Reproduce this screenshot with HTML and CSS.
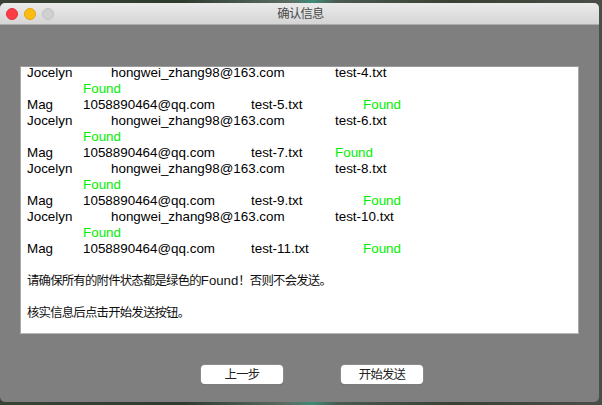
FILE: index.html
```html
<!DOCTYPE html>
<html>
<head>
<meta charset="utf-8">
<link rel="stylesheet" href="styles.css">
</head>
<body>
<div class="window">
  <div class="titlebar">
    <div class="lights">
      <span class="light red"></span>
      <span class="light yellow"></span>
      <span class="light gray"></span>
    </div>
    <div class="title">确认信息</div>
  </div>
  <div class="content">
    <div class="textbox">
      <div class="lines">
        <div class="row"><span class="c-jname">Jocelyn</span><span class="c-jmail">hongwei_zhang98@163.com</span><span>test-4.txt</span></div>
        <div class="row found-row"><span class="found">Found</span></div>
        <div class="row"><span class="c-mname">Mag</span><span class="c-mmail">1058890464@qq.com</span><span class="c-file">test-5.txt</span><span class="found">Found</span></div>
        <div class="row"><span class="c-jname">Jocelyn</span><span class="c-jmail">hongwei_zhang98@163.com</span><span>test-6.txt</span></div>
        <div class="row found-row"><span class="found">Found</span></div>
        <div class="row"><span class="c-mname">Mag</span><span class="c-mmail">1058890464@qq.com</span><span class="c-file-short">test-7.txt</span><span class="found">Found</span></div>
        <div class="row"><span class="c-jname">Jocelyn</span><span class="c-jmail">hongwei_zhang98@163.com</span><span>test-8.txt</span></div>
        <div class="row found-row"><span class="found">Found</span></div>
        <div class="row"><span class="c-mname">Mag</span><span class="c-mmail">1058890464@qq.com</span><span class="c-file">test-9.txt</span><span class="found">Found</span></div>
        <div class="row"><span class="c-jname">Jocelyn</span><span class="c-jmail">hongwei_zhang98@163.com</span><span>test-10.txt</span></div>
        <div class="row found-row"><span class="found">Found</span></div>
        <div class="row"><span class="c-mname">Mag</span><span class="c-mmail">1058890464@qq.com</span><span class="c-file">test-11.txt</span><span class="found">Found</span></div>
        <div class="row blank"></div>
        <div class="row cjk">请确保所有的附件状态都是绿色的<span class="latin">Found</span>！否则不会发送。</div>
        <div class="row blank"></div>
        <div class="row cjk">核实信息后点击开始发送按钮。</div>
      </div>
    </div>
    <div class="buttons">
      <button class="btn">上一步</button>
      <button class="btn">开始发送</button>
    </div>
  </div>
</div>
</body>
</html>
```
FILE: styles.css
```css
html, body {
  margin: 0;
  padding: 0;
}
body {
  width: 602px;
  height: 405px;
  overflow: hidden;
  background: linear-gradient(90deg, #3a4236 0%, #2f3a2e 30%, #5b6e64 48%, #3f8a78 52%, #4b5a50 56%, #3a4034 75%, #4a4e48 100%);
  font-family: "Liberation Sans", Arial, "Noto Sans CJK SC", sans-serif;
}
.window {
  margin-top: 3px;
  width: 599px;
  height: 399px;
  background: #7f7f7f;
  border-radius: 5px;
  overflow: hidden;
  display: flex;
  flex-direction: column;
}
.titlebar {
  height: 21px;
  background: linear-gradient(#ebebeb, #d5d5d5);
  border-bottom: 1px solid #acacac;
  position: relative;
  display: flex;
  align-items: center;
  justify-content: center;
  flex: none;
}
.lights {
  position: absolute;
  left: 6px;
  top: 5px;
  display: flex;
  gap: 6px;
}
.light {
  width: 12px;
  height: 12px;
  border-radius: 50%;
  box-sizing: border-box;
}
.red { background: #fc3d47; border: 1px solid #e0303a; }
.yellow { background: #fdbc12; border: 1px solid #e0a510; }
.gray { background: #d0d0d0; border: 1px solid #c2c2c2; }
.title {
  font-family: "Noto Sans CJK SC", sans-serif;
  font-size: 12.4px;
  letter-spacing: -0.8px;
  color: #4a4a4a;
  line-height: 21px;
  margin-left: 2px;
}
.content {
  flex: 1;
  padding: 41px 20px 0 20px;
  display: flex;
  flex-direction: column;
}
.textbox {
  height: 268px;
  background: #fff;
  border-top: 1px solid #9a9a9a;
  border-left: 1px solid #a8a8a8;
  border-right: 1px solid #a8a8a8;
  border-bottom: 1px solid #b8b8b8;
  box-sizing: border-box;
  overflow: hidden;
}
.lines {
  margin-top: -2px;
  padding-left: 6px;
  font-size: 13.4px;
  line-height: 16px;
  color: #000;
}
.row {
  display: flex;
  white-space: nowrap;
  height: 16px;
}
.row span { flex: none; }
.c-jname { width: 84px; }
.c-jmail { width: 224px; }
.c-mname { width: 56px; }
.c-mmail { width: 168px; }
.c-file { width: 112px; }
.c-file-short { width: 84px; }
.found-row { padding-left: 56px; }
.found { color: #00f000; }
.cjk {
  font-family: "Noto Sans CJK SC", sans-serif;
  font-size: 12.4px;
  letter-spacing: -0.8px;
  color: #111;
  line-height: 15px;
}
.cjk .latin {
  font-family: "Liberation Sans", Arial, sans-serif;
  font-size: 13.2px;
  letter-spacing: 0;
}
.buttons {
  display: flex;
  gap: 58px;
  padding-left: 181px;
  margin-top: 31px;
}
.btn {
  width: 82px;
  height: 19px;
  padding: 0;
  background: #fff;
  border: none;
  border-radius: 4px;
  box-shadow: 0 0 0 0.5px #9a9a9a, 0 1px 1px rgba(0,0,0,0.25);
  font-family: "Noto Sans CJK SC", sans-serif;
  font-size: 12.4px;
  letter-spacing: -0.8px;
  line-height: 19px;
  color: #222;
}
```
